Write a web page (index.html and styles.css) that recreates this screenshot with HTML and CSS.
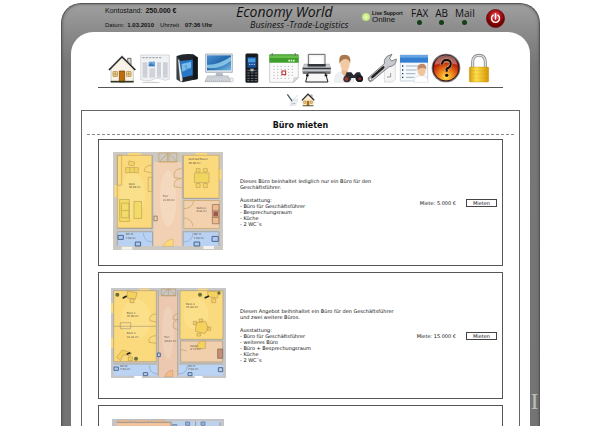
FILE: index.html
```html
<!DOCTYPE html>
<html lang="de">
<head>
<meta charset="utf-8">
<title>Economy World</title>
<link rel="stylesheet" href="styles.css">
</head>
<body>
<div class="frame">
  <header class="topbar">
    <div class="account">
      <div class="account-row"><span>Kontostand:</span><b>250.000 €</b></div>
      <div class="account-row small"><span>Datum:</span><strong>1.03.2010</strong><span class="clock">Uhrzeit</span><strong class="time">07:36 Uhr</strong></div>
    </div>
    <div class="brand">
      <div class="brand-name">Economy World</div>
      <div class="brand-sub">Business -Trade-Logistics</div>
    </div>
    <div class="support"><span class="lamp"></span><div><div class="support-label">Live Support</div><div class="support-state">Online</div></div></div>
    <div class="lights">
      <div class="light">FAX<i></i></div>
      <div class="light">AB<i></i></div>
      <div class="light">Mail<i></i></div>
    </div>
    <button class="power" aria-label="Abmelden">
      <svg viewBox="0 0 20 20"><defs><radialGradient id="pw" cx=".5" cy=".35"><stop offset="0" stop-color="#e77"/><stop offset=".5" stop-color="#b81820"/><stop offset="1" stop-color="#700"/></radialGradient></defs><circle cx="10" cy="10" r="9.5" fill="url(#pw)" stroke="#611" stroke-width=".8"/><path d="M7.5 6.5a4.2 4.2 0 1 0 5 0M10 5v5.5" fill="none" stroke="#fff" stroke-width="1.5" stroke-linecap="round"/></svg>
    </button>
  </header>

  <main class="screen">
    <nav class="tools">
      <a href="#" aria-label="Start"><svg viewBox="21 24 90 90"><path d="M83 40h10v22l-10-10z" fill="#ddd" stroke="#333" stroke-width="2"/><path d="M33 68L66 38l34 30v43H33z" fill="#f8f3e6" stroke="#777"/><path d="M27 75L66 35l40 40" fill="none" stroke="#222" stroke-width="5"/><path d="M30 70L66 33l37 36" fill="none" stroke="#999" stroke-width="1.5"/><path d="M58 78h16v33H58z" fill="#c06d08" stroke="#6d3a00" stroke-width="2"/><path d="M39 80h13v14H39zm41 0h13v14H80zM39 87h13m28 0h13M45.500 80v14m41-14v14" fill="#fff3b8" stroke="#a46e20" stroke-width="2"/><path d="M32 110h69" stroke="#333a20" stroke-width="5"/></svg></a>
      <a href="#" aria-label="Zeitung"><svg viewBox="119 24 90 90"><ellipse cx="152" cy="113" rx="27" ry="3" fill="#ccc"/><path d="M121 30h86v72q-12 8-24 0-15-6-32 4-15 4-30-2z" fill="#f1f2f4" stroke="#c5c8ce" stroke-width="2"/><path d="M126 38h58" stroke="#a6aab2" stroke-width="4" stroke-dasharray="7 3"/><path d="M127 52h14v46h-14zm20 18h17v28h-17zm23-18h12v46h-12zm18 0h14v46h-14z" fill="#d0d3da"/><path d="M127 56h14m-14 7h14m-14 7h14m-14 7h14m-14 7h14m29-28h12m-12 7h12m-12 7h12m-12 7h12m-12 7h12m6-28h14m-14 7h14m-14 7h14m-14 7h14m-14 7h14" stroke="#bcc0c8"/><path d="M145 50h19v14h-19z" fill="#6ea6dc"/><path d="M145 60l7-6 12 8v2h-19z" fill="#397dc0"/></svg></a>
      <a href="#" aria-label="Planer"><svg viewBox="217 24 90 90"><path d="M231 33q20-8 50-5l13 9v65l-46 10-17-9z" fill="#20262b"/><path d="M241 48l38-4v47l-35 8z" fill="#2876c8"/><path d="M246 57l28-7v18l-26 12z" fill="#79bbee"/><path d="M231 34l10 10 2 67-12-8z" fill="#3b4146"/><path d="M235 43l4 2 10 60-3 6-5-5z" fill="#f3f3f3" stroke="#677" stroke-width="1"/><path d="M280 35l14 2v65l-13 2z" fill="#11161a"/><path d="M253 65l8-3-2 12 10-4" stroke="#166" fill="none"/></svg></a>
      <a href="#" aria-label="Computer"><svg viewBox="313 24 90 90"><defs><linearGradient id="mo" y2="1" x2="1"><stop stop-color="#4b91d3"/><stop offset=".5" stop-color="#2368ac"/><stop offset="1" stop-color="#75bce8"/></linearGradient></defs><path d="M318 27h80v55h-80z" fill="#e4e8ec" stroke="#8a97a6" stroke-width="2"/><path d="M322 31h72v45h-72z" fill="url(#mo)"/><path d="M322 59q28 3 72-24v12q-38 29-72 21z" fill="#97d2ef" opacity=".8"/><path d="M350 82h18l3 11h-24z" fill="#b6bdc6"/><path d="M324 93h61l9 17h-78z" fill="#e4e7eb" stroke="#939aa5" stroke-width="2"/><path d="M326 98h58m-61 4h64m-66 4h68" stroke="#9aa2ad" stroke-width="2" stroke-dasharray="4 2"/><ellipse cx="396" cy="105" rx="5" ry="7" fill="#eee" stroke="#999"/></svg></a>
      <a href="#" aria-label="Telefon"><svg viewBox="20 24 90 90"><rect x="46" y="26" width="37" height="87" rx="4" fill="#15181d" stroke="#555" stroke-width="2"/><path d="M51 36h27v32H51z" fill="#174e96"/><path d="M53 40h22v12H53z" fill="#4c9bda"/><path d="M56 58h18" stroke="#b6d8f4" stroke-width="3" stroke-dasharray="3 2"/><path d="M51 76h8m12 0h8M51 84h7m4 0h7m4 0h7M51 92h7m4 0h7m4 0h7M51 100h7m4 0h7m4 0h7M51 107h7m4 0h7m4 0h7" stroke="#6a727b" stroke-width="3"/><rect x="60" y="71" width="10" height="8" fill="#aab2bb"/></svg></a>
      <a href="#" aria-label="Kalender"><svg viewBox="117 24 90 90"><path d="M119 30h86v68l-15 14h-71z" fill="#fafafa" stroke="#b8b8b8" stroke-width="2"/><path d="M118 31q0-3 3-3h81q4 0 4 3v22h-88z" fill="#3f9f2c"/><path d="M118 31h88v8h-88z" fill="#69bd4c"/><path d="M127 25v8m69-8v8" stroke="#777" stroke-width="4"/><path d="M175 47h20" stroke="#d9f4cf" stroke-width="5" stroke-dasharray="5 2"/><path d="M130 64h64M130 73h64M130 82h64M130 91h64M130 100h48" stroke="#bbb" stroke-width="3" stroke-dasharray="4 7"/><rect x="156" y="78" width="11" height="11" fill="#fff" stroke="#be2020" stroke-width="3"/><path d="M205 98l-15 14 2-14z" fill="#ddd" stroke="#999"/></svg></a>
      <a href="#" aria-label="Drucker"><svg viewBox="215 24 90 90"><path d="M234 28h50v36h-50z" fill="#f0f0f0" stroke="#666" stroke-width="3"/><path d="M241 34h36v25h-36z" fill="#fff"/><path d="M222 57h10v8h54v-8h11l4 12v16h-84V69z" fill="#c8cbd0" stroke="#777"/><path d="M217 68h84v5h-84zm15-11h54v7h-54z" fill="#34373b"/><path d="M218 79h82v8h-82z" fill="#73777d"/><path d="M233 84h52l8 27h-67z" fill="#f7f7f7" stroke="#222" stroke-width="3"/><path d="M227 91h8m48 0h8" stroke="#111" stroke-width="5"/></svg></a>
      <a href="#" aria-label="Suche"><svg viewBox="316 24 90 90"><path d="M317 112q-1-29 20-31h20q17 3 19 31z" fill="#eef0f2" stroke="#d2d5d8"/><path d="M339 71h18v13l-9 11-9-11z" fill="#e9b88e"/><ellipse cx="349" cy="57" rx="14" ry="20" fill="#f3c9a3"/><path d="M333 57q-6-28 14-28 23 0 17 27-2-13-13-14-13 0-18 15z" fill="#a8784f"/><path d="M345 104l9-22 14 0 7 9 9-9 10 0 9 22q-4 9-13 7-9-1-10-12h-12q-3 13-13 13-9-1-10-8z" fill="#282a30"/><circle cx="354" cy="102" r="10" fill="#402e31"/><circle cx="393" cy="101" r="10" fill="#15191f"/><circle cx="353" cy="102" r="5" fill="#a23c32"/><circle cx="393" cy="101" r="5" fill="#7d2b2d"/></svg></a>
      <a href="#" aria-label="Einstellungen"><svg viewBox="17 24 90 90"><path d="M69 59h33v44l-9 8H69z" fill="#f5f5f5" stroke="#ccc" stroke-width="2"/><path d="M88 84v12h-11" fill="none" stroke="#999" stroke-width="3"/><path d="M20 99L69 56q-3-22 23-28l-7 12 6 8 14-6q1 20-23 24L31 109q-9 4-11-10z" fill="#c8cbd0" stroke="#555" stroke-width="2"/><path d="M33 96l33-29" stroke="#222" stroke-width="7" stroke-linecap="round"/><circle cx="27" cy="103" r="4" fill="#fff" stroke="#555" stroke-width="2"/></svg></a>
      <a href="#" aria-label="Personal"><svg viewBox="112 24 90 90"><path d="M116 30h82v78h-82z" fill="#f6f9fc" stroke="#b2c3d5" stroke-width="2"/><path d="M115 30h84v23h-84z" fill="#347fd0"/><path d="M115 30h84v8h-84z" fill="#68a6e4"/><path d="M121 63h4m-4 12h4m-4 11h4m-4 11h4" stroke="#234" stroke-width="4"/><path d="M133 63h54m-54 12h32m-32 11h28m-28 11h25" stroke="#9db0c3" stroke-width="3"/><path d="M157 112q0-18 20-20 23 1 24 20z" fill="#fff" stroke="#bbb"/><ellipse cx="180" cy="77" rx="12" ry="16" fill="#f2c49e"/><path d="M167 75q0-20 14-19 14 0 13 17-14-9-27 2z" fill="#c28a62"/></svg></a>
      <a href="#" aria-label="Hilfe"><svg viewBox="211 24 90 90"><defs><radialGradient id="he" cx=".5" cy=".85" r=".8"><stop stop-color="#ffe348"/><stop offset=".45" stop-color="#e66b12"/><stop offset=".8" stop-color="#a81308"/><stop offset="1" stop-color="#510a08"/></radialGradient></defs><circle cx="256" cy="69" r="43" fill="#777"/><circle cx="256" cy="69" r="39" fill="url(#he)" stroke="#391313" stroke-width="3"/><path d="M222 60q3-28 34-29 31 1 34 29-34-13-68 0z" fill="#fff" opacity=".35"/><path d="M244 59q1-15 14-14 14 1 12 14-2 9-12 12v9" fill="none" stroke="#fff0bf" stroke-width="9"/><path d="M244 59q1-15 14-14 14 1 12 14-2 9-12 12v9" fill="none" stroke="#210b06" stroke-width="7"/><circle cx="258" cy="91" r="5" fill="#210b06"/></svg></a>
      <a href="#" aria-label="Sicherheit"><svg viewBox="308 24 90 90"><defs><linearGradient id="lo"><stop stop-color="#d39c08"/><stop offset=".35" stop-color="#ffe151"/><stop offset="1" stop-color="#d69600"/></linearGradient></defs><path d="M334 70V50q1-19 19-19t19 19v20" fill="none" stroke="#8b8e92" stroke-width="9"/><path d="M334 70V50q1-19 19-19t19 19v20" fill="none" stroke="#dcdee0" stroke-width="4"/><rect x="324" y="66" width="58" height="45" rx="3" fill="url(#lo)" stroke="#b88400"/><path d="M325 77h56m-56 11h56m-56 11h56" stroke="#bb8b10" opacity=".5"/></svg></a>
    </nav>
    <nav class="crumbs">
      <a href="#" aria-label="Notiz"><svg viewBox="0 0 42 42"><path d="M16 18h20l-7 20H12z" fill="#edf1f2" stroke="#c7d0d3"/><path d="M4 4l15 21" stroke="#4a5e61" stroke-width="4"/><path d="M18 26l17-20" stroke="#d8e0e2" stroke-width="3"/><path d="M17 33l11-2" stroke="#999" stroke-width="2"/></svg></a>
      <a href="#" aria-label="Büro"><svg viewBox="21 28 90 90"><path d="M83 40h10v22l-10-10z" fill="#ddd" stroke="#333" stroke-width="2"/><path d="M33 68L66 38l34 30v43H33z" fill="#f8edce" stroke="#777"/><path d="M27 75L66 35l40 40" fill="none" stroke="#222" stroke-width="8"/><path d="M58 78h16v33H58z" fill="#b86a10"/><path d="M39 80h13v14H39zm41 0h13v14H80z" fill="#fff3b8" stroke="#a46e20" stroke-width="4"/><path d="M32 110h69" stroke="#333a20" stroke-width="5"/></svg></a>
    </nav>

    <section class="content">
      <h1>Büro mieten</h1>
      <article class="offer">
        <svg class="plan plan-a" viewBox="72 50 331 295">
          <path d="M72 50h331v295H72z" fill="#ccc9c4"/>
          <path d="M85 60h105v219H85zM76 150h10v36H76zM118 53h38v8h-38z" fill="#fada7c"/>
          <path d="M283 60h108v129H283zM320 53h35v8h-35zM391 103h8v30h-8z" fill="#fada7c"/>
          <path d="M195 80h83v253h-83z" fill="#f1d0b4"/><path d="M285 196h107v84H285z" fill="#f3d1af"/>
          <path d="M85 290h106v43H85zm201 0h105v43H286z" fill="#b9d2f3"/>
          <ellipse cx="130" cy="180" rx="38" ry="70" fill="#fff0ae" opacity=".3"/><ellipse cx="238" cy="190" rx="25" ry="85" fill="#fbe5cf" opacity=".4"/>
          <g fill="none" stroke="#c4a25a" stroke-width="2"><path d="M85 60h105v219H85zM283 60h108v129H283zM85 60h13v90H85zM178 126h12v43h-12zM190 90q-24 0-24 18l24 5M278 100q-25 0-22 27l22 3q-24 0-22 25l22 2"/><path d="M110 97h38v15h-38zM120 77l17 3-2 12-16-3zM123 95v17M136 95v17M317 113h44v29h-44zM322 100h12v10h-12zm22 0h12v10h-12zm-22 45h12v12h-12zm22 0h12v12h-12z" fill="#f0d660"/><path d="M92 193h29v66H92zM97 204h23v44H97zM97 226h23M135 199h23v51h-23z" fill="#f4da6a" stroke="#b9a546"/><path d="M210 53h54v27h-54zM212 79l24-25v25zm28-25l24 25h-24zM285 196h107v84H285zM285 221q28-2 30-25M285 248q24 2 28 26"/></g>
          <path d="M222 334h31v-22q-22 2-31 22z" fill="#ffd979" stroke="#b89454"/>
          <path d="M371 208h20v58h-20zM371 227h20m-20 20h20" fill="#f0ba8e" stroke="#806b58" stroke-width="2"/><path d="M374 229h14v15h-14z" fill="#9e5b50"/>
          <path d="M190 60v220H85M283 60v130h108M190 290H85v43m198-43h108v43M191 290v43m92-43v43" stroke="#a9a49f" fill="none" stroke-width="3"/>
          <path d="M163 293q2 27 27 28M313 293q-2 27-27 28" stroke="#8da5ca" fill="none" stroke-width="2"/>
          <path d="M87 301h16v12H87zm52 20h16v12h-16zm177 0h17v12h-17zm54-17h19v15h-19z" fill="#adc8ee" stroke="#4b668d" stroke-width="3"/><path d="M195 243h10v14h-10z" fill="#ecd4b1" stroke="#78604b" stroke-width="2"/>
          <path d="M98 335h32v9H98zm246-2h32v9h-32z" fill="#f4f2ed"/>
          <g class="room"><text x="119" y="148">Büro</text><text x="119" y="159">30.98 m²</text><text x="299" y="75">Konf.Auf.Essen</text><text x="299" y="86">19.80 m²</text><text x="222" y="186">Flur</text><text x="222" y="197">22.65 m²</text><text x="323" y="221">Küchen</text><text x="323" y="232">9.41 m²</text><text x="110" y="300">WC D</text><text x="110" y="311">7.68 m²</text><text x="315" y="300">WC H</text><text x="315" y="311">7.68 m²</text></g>
        </svg>
        <div class="details"><p>Dieses Büro beinhaltet lediglich nur ein Büro für den<br>Geschäftsführer.</p><p>Ausstattung:<br>- Büro für Geschäftsführer<br>- Besprechungsraum<br>- Küche<br>- 2 WC´s</p></div>
        <div class="price">Miete: 5.000 €</div>
        <button class="rent">Mieten</button>
      </article>
      <article class="offer">
        <svg class="plan plan-b" viewBox="60 52 345 270">
          <path d="M60 52h345v270H60z" fill="#c7c7c9"/>
          <path d="M68 60h128v213H68zM60 97h10v30H60zm0 105h10v30H60zM145 54h30v8h-30zM267 60h129v146H267zM320 54h30v8h-30z" fill="#fada7c"/>
          <path d="M203 77h56v242h-56z" fill="#ecc8b0"/><path d="M269 211h126v63H269z" fill="#f2cfac"/>
          <path d="M68 280h130v35H68zm196 0h132v35H264z" fill="#bcd4f3"/>
          <ellipse cx="135" cy="145" rx="45" ry="60" fill="#fff0af" opacity=".25"/><ellipse cx="315" cy="130" rx="38" ry="48" fill="#fff0af" opacity=".25"/><ellipse cx="231" cy="185" rx="18" ry="80" fill="#f6dcc6" opacity=".4"/>
          <path d="M68 60h128v213H68zM68 167h128M88 156h31v18H88zM267 60h129v146H267zM269 211h126v63H269zM202 58v257M260 58v257M68 280h130M264 280h132" fill="none" stroke="#aa9878" stroke-width="2"/>
          <g fill="none" stroke="#bf9c61" stroke-width="2"><path d="M211 55h43v20h-43zM211 75l21-20v20zm22-20l21 20h-21M196 130q-22 0-20 20l20 4M196 195q-25 0-22 20l22 3M262 128q-20 4-15 20l15-2q-18 3-15 25l15 8M269 236l18 5"/><path d="M109 61l29 5-5 20-24-4zM117 84h12v12h-12zM76 260l18-22 28 9-6 8-20-3-7 18zM112 259h12v11h-12zM350 62l35 1-6 19-28-4zM362 84h12v12h-12zM316 156l27-4 10 20-12 17-28-8zM307 152h10v10h-10zm17-7h11v9h-11zm-6 43h11v8h-11zm31-19h10v10h-10zM328 211h15v23h-26v-9z" fill="#f5d25c"/></g>
          <path d="M95 83l12-7m0 175l11-5M341 82l13-6" stroke="#26221c" stroke-width="5"/><g fill="#667038"><circle cx="79" cy="72" r="6"/><circle cx="135" cy="264" r="6"/><circle cx="327" cy="72" r="6"/><circle cx="384" cy="67" r="5"/></g>
          <path d="M380 235h15v28h-15z" fill="#c98e72" stroke="#716059" stroke-width="2"/><path d="M221 318q7-19 24-20v20z" fill="#f1bb88" stroke="#ae8463"/>
          <path d="M69 289h13v10H69zm88 17h13v9h-13zm134 0h12v9h-12zm91-15h13v12h-13zM199 247h9v11h-9z" fill="#b4cdec" stroke="#526b90" stroke-width="3"/><path d="M175 285q1 25 25 25M289 285q-2 25-25 25" fill="none" stroke="#849fca" stroke-width="2"/><path d="M130 316h23v6h-23zm181 0h24v6h-24z" fill="#fff"/>
          <g class="room"><text x="107" y="129">Büro 2</text><text x="107" y="140">25.09 m²</text><text x="107" y="191">Büro 3</text><text x="107" y="202">23.81 m²</text><text x="285" y="102">Büro 1</text><text x="285" y="113">25.84 m²</text><text x="220" y="203">Flur</text><text x="220" y="214">20.61 m²</text><text x="298" y="228">Küche</text><text x="298" y="239">8.71 m²</text><text x="87" y="288">WC D</text><text x="87" y="299">7.68 m²</text><text x="291" y="288">WC H</text><text x="291" y="299">7.68 m²</text></g>
        </svg>
        <div class="details"><p>Diesen Angebot beihnhaltet ein Büro für den Geschäftsführer<br>und zwei weitere Büros.</p><p>Ausstattung:<br>- Büro für Geschäftsführer<br>- weiteres Büro<br>- Büro + Besprechungsraum<br>- Küche<br>- 2 WC´s</p></div>
        <div class="price">Miete: 15.000 €</div>
        <button class="rent">Mieten</button>
      </article>
      <article class="offer">
        <svg class="plan plan-c" viewBox="64 445 336 300">
          <path d="M64 445h336v300H64z" fill="#c5c3c3"/><path d="M78 455h163v280H78z" fill="#f3c49b"/><path d="M247 451h146v284H247z" fill="#bdd2ea"/><path d="M82 448h40v8H82zm49 0h44v8h-44zm52 0h40v8h-40z" fill="#edbb90" stroke="#a59b91"/><path d="M285 454h12v10h-12zm46 0h12v10h-12zM246 462h12v10h-12z" fill="#99b5db" stroke="#526b90" stroke-width="2"/><path d="M315 452v60M78 455h163v280M388 455v40" fill="none" stroke="#9c9894" stroke-width="3"/>
        </svg>
      </article>
    </section>
  </main>
  <div class="stamp" aria-hidden="true">I</div>
</div>
</body>
</html>
```
FILE: styles.css
```css
* { box-sizing: border-box; }
html, body { margin: 0; }
body {
  height: 100vh;
  padding: 3px 60px 0 61px;
  overflow: hidden;
  background: #fff;
  color: #111;
  font-family: "DejaVu Sans", Verdana, sans-serif;
  font-size: 5px;
  line-height: 6px;
}
.frame {
  position: relative;
  min-height: 100%;
  padding: 0 9px;
  border: 1px solid #555;
  border-bottom: 0;
  border-radius: 20px 20px 0 0;
  background: linear-gradient(#a0a0a0, #8a8a8a 28px, #777 60px, #737373);
  box-shadow: inset 0 0 3px #555;
}
.topbar {
  display: grid;
  grid-template-columns: 131px 126px 48px 1fr 19px;
  height: 28px;
  padding: 0 25px 0 34px;
  font-family: "Liberation Sans", Arial, sans-serif;
  color: #111;
  white-space: nowrap;
}
.account { padding-top: 2px; font-size: 7px; line-height: 10px; }
.account-row { display: flex; gap: 3px; }
.account-row.small { padding-top: 4px; font-size: 6px; }
.clock { margin-left: 3px; }
.time { margin-left: 3px; }
.brand { font-family: "Open Sans", sans-serif; font-style: italic; }
.brand-name { font-size: 14px; line-height: 15px; }
.brand-sub { padding-left: 14px; font-size: 9px; line-height: 12px; }
.support { display: flex; gap: 2px; align-items: center; height: 26px; }
.lamp {
  width: 8px;
  height: 8px;
  border-radius: 50%;
  background: radial-gradient(#efffb8, #a4d860);
}
.support-label { font-size: 5px; line-height: 5px; font-weight: bold; }
.support-state { font-size: 8px; line-height: 8px; }
.lights { display: flex; gap: 7px; padding: 3px 0 0 1px; font: 10px/13px "Open Sans", sans-serif; }
.light { display: flex; flex-direction: column; align-items: center; }
.light i { width: 5px; height: 5px; border-radius: 50%; background: #123f16; }
.power { align-self: center; width: 19px; height: 19px; padding: 0; border: 0; background: none; }
.power svg { display: block; }

.screen {
  min-height: 400px;
  padding: 21px 10px 0;
  border-radius: 22px 22px 0 0;
  background: #fff;
}
.tools {
  display: grid;
  grid-template-columns: repeat(12, 1fr);
  justify-items: center;
  margin: 0 17px;
  padding: 0 8px 4px;
  border-bottom: 1px solid #555;
}
.tools a, .tools svg { display: block; width: 30px; height: 30px; }
.crumbs { display: flex; justify-content: center; gap: 1px; padding: 5px 0 3px; }
.crumbs svg { display: block; width: 14px; height: 14px; }

.content { padding: 0 5px; border: 1px solid #666; border-bottom: 0; }
h1 {
  margin: 0 0 4px;
  padding: 9px 0 3px;
  border-bottom: 1px dashed #888;
  color: #111;
  font-size: 8px;
  line-height: 11px;
  text-align: center;
}
.offer {
  display: grid;
  grid-template-columns: 118px 1fr auto 31px;
  align-items: center;
  height: 127px;
  margin: 0 11px 6px;
  padding: 0 5px 0 10px;
  border: 1px solid #555;
}
.plan { justify-self: center; }
.plan-a { width: 110px; height: 98px; margin-bottom: 4px; }
.plan-b { width: 115px; height: 90px; margin-bottom: 6px; }
.plan-c { width: 112px; height: 100px; }
.room text { fill: #4f4538; font: 8px "DejaVu Sans", sans-serif; }
.details { padding-left: 13px; }
.details p { margin: 0; }
.details p + p { margin-top: 7px; }
.price { padding-right: 10px; }
.rent {
  height: 8px;
  padding: 0;
  border: 1px solid #444;
  background: #fff;
  color: #111;
  font: inherit;
}
.stamp {
  position: absolute;
  right: 0;
  top: 387px;
  width: 9px;
  color: #bbb;
  font: 24px/20px "Liberation Serif", serif;
  text-align: center;
}
```
